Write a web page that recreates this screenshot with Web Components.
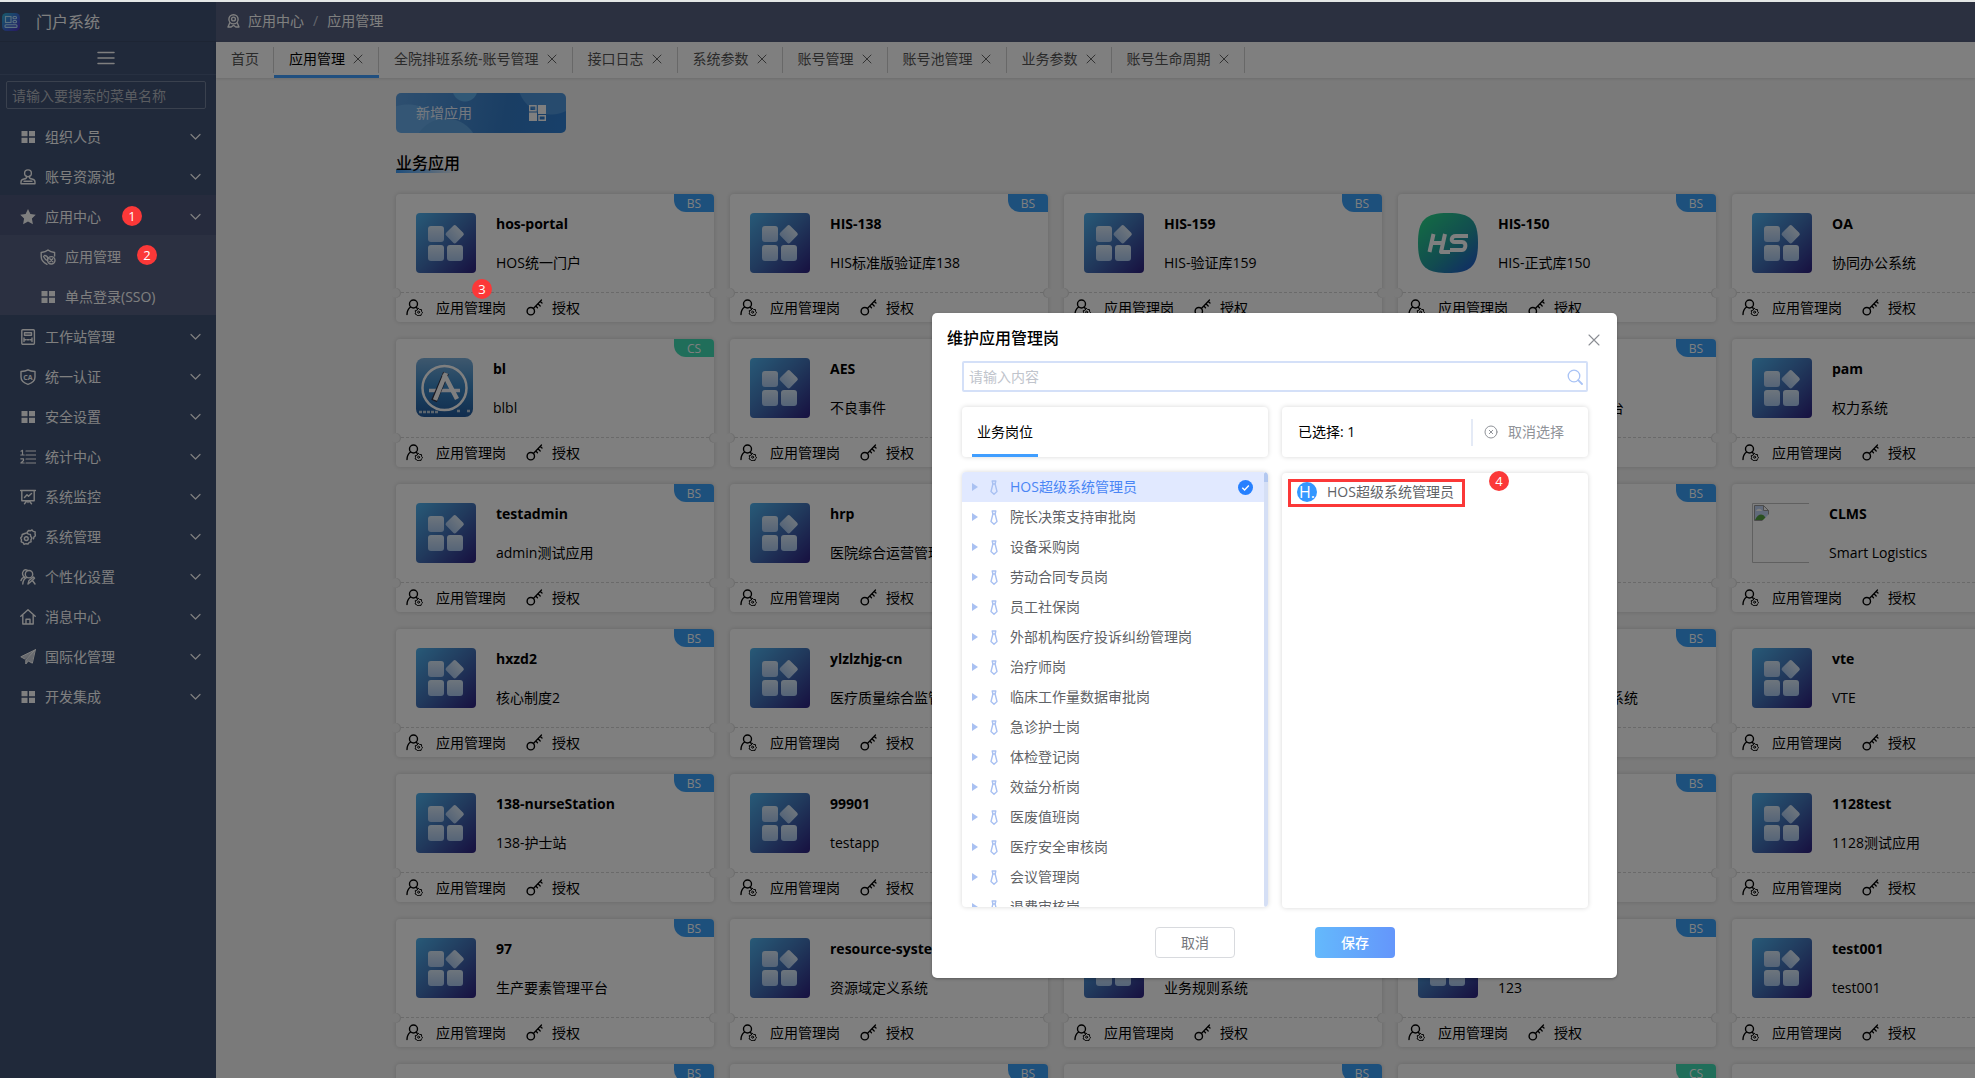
<!DOCTYPE html>
<html lang="zh-CN">
<head>
<meta charset="utf-8">
<title>门户系统</title>
<style>
html, body { margin: 0; height: 100%; overflow: hidden; }
body { font: 14px/20px "Open Sans", "Noto Sans CJK SC", sans-serif; color: #000; background: #f5f5f5; }
</style>
</head>
<body>
<portal-app></portal-app>
<script>
const svg = (w, h, body, box) => `<svg aria-hidden="true" width="${w}" height="${h}" viewBox="${box || `0 0 ${w} ${h}`}" fill="none" stroke="currentColor" stroke-width="1.4" stroke-linejoin="round" stroke-linecap="round">${body}</svg>`;
const ICONS = {
  grid: svg(16, 16, '<path d="M1.500 2h6v5.300h-6zM9 2h6v5.300H9zM1.500 8.800h6v5.200h-6zM9 8.800h6v5.200H9z" fill="currentColor" stroke="none"/>'),
  user: svg(16, 16, '<circle cx="8" cy="4.3" r="3.4"/><path d="M6.500 7.300C6.800 9 6 9.700 4 10c-2 .3-3 1.200-3 3v1.700h14V13c0-1.800-1-2.700-3-3-2-.3-2.800-1-2.500-2.700M4 12.300h8"/>'),
  star: svg(16, 16, '<path d="M8 0l2.400 5 5.400.8-3.900 3.800 1 5.600L8 12.500l-4.900 2.700 1-5.600L.2 5.800 5.600 5z" fill="currentColor" stroke="none"/>'),
  shieldUser: svg(16, 16, '<path d="M14.600 7V3.500C12 3.300 9.600 2.500 8 1 6.400 2.500 4 3.300 1.200 3.500v4c0 3.500 2 6 5.800 7.800"/><path d="M3.500 7.500c1 2 2.500 3.500 4 4M4.500 6.500c1.500 0 3 1 3.500 3"/><circle cx="11.300" cy="11.300" r="3.700"/><path d="M9.800 9.800l3 3m0-3l-3 3"/>'),
  station: svg(16, 16, '<rect x="1.800" y=".8" width="12.600" height="14.400" rx="1"/><path d="M4.500 3.800h7v2.400h-7zM4 9v3.500M12 9v3.500M4 10.800h2M10 10.800h2M7.300 10.800h1.400"/>'),
  ca: svg(16, 16, '<path d="M8 .8C6 2 3.500 2.400 1 2.500V8c0 3.500 3 6 7 7.300 4-1.300 7-3.800 7-7.300V2.500C12.500 2.400 10 2 8 .8z"/><text x="8" y="10.500" text-anchor="middle" font-size="7" font-weight="700" fill="currentColor" stroke="none" font-family="Open Sans">CA</text>'),
  ordered: svg(16, 16, '<path d="M6 2h10M6 6h10M6 10h10M6 14h10" stroke-width="1.200"/><path d="M1 2.200L2.500 1.400V6M.8 6h3.400M.8 9.800h2.700v1.700L.9 14h3.300" stroke-width="1.200"/>'),
  board: svg(16, 16, '<path d="M.5 1.500h15M1.800 1.500v10.300h12.400V1.500M4.500 8.500L7 5.800l1.500 1.400L11.500 4.500M6.800 12L4.500 14.800M9.200 12l2.300 2.800M8 12v1.500"/>'),
  gears: svg(16, 16, '<path d="M4.800 4.500l2-.6 1.600 1.200 2 .3.300 2 1.200 1.600-1 1.800.2 2-1.900.6-1.200 1.600-2-.3-1.900.6-1-1.700-1.900-.8.300-2L.6 9l1.300-1.500L2.200 5.500z"/><circle cx="6.300" cy="9.600" r="1.900"/><path d="M7.200 3.200L8.500 1.500l2 .3L12 .8l1.200 1.600 2 .5-.2 2 .6 1.700-1.500 1.200-.6 2"/>'),
  persona: svg(16, 16, '<circle cx="9" cy="5.200" r="3.700"/><path d="M6.800 8.300C4 9.500 3 11.500 2.800 15M4.500 8.200C2.500 7 2 4 3.200 2.300 4 1 5.800.6 7.200 1.200M1 11.500c.4-1.600 1.500-2.700 3-3.400M8 15l1-3.500 4.500-3.500 1 1.200-4.300 4L8 15zM12.500 11.500L15 15"/>'),
  home: svg(16, 16, '<path d="M.8 7.300L8 .8l7.200 6.500M2.800 6v9h10.400V6M6 15v-4.800h4V15"/>'),
  plane: svg(16, 16, '<path d="M15.200.8L.8 7.800l4 2.200zM15.200.8L5.800 11v4l2.500-3L12 14z" fill="currentColor" fill-opacity=".75" stroke-width="1"/>'),
  chevron: svg(11, 8, '<path d="M1 1.500l4.500 4.500L10 1.500" stroke-width="1.200"/>'),
  menu: svg(18, 14, '<path d="M1 1.500h16M1 7h16M1 12.500h16" stroke-width="1.500"/>'),
  cross: svg(10, 10, '<path d="M1 1l8 8M9 1L1 9" stroke-width="1"/>'),
  crossBig: svg(12, 12, '<path d="M1 1l10 10M11 1L1 11" stroke-width="1.100"/>'),
  medal: svg(13, 14, '<circle cx="6.500" cy="5.300" r="4.600"/><circle cx="6.500" cy="5" r="1.900"/><path d="M2.800 8.800L1 13h3.200l2.300-1.700L8.800 13H12l-1.800-4.200"/>'),
  postUser: svg(17, 17, '<circle cx="7.500" cy="5" r="4"/><path d="M4.600 8C2.500 9.500 1 12 1 15.500M10 8.300l1 .8"/><path d="M12.300 9.200l1.300 1.300 1.900.1.100 1.800 1 1.400-1.300 1.200-.4 1.600-1.700-.2-1.500.6-1.100-1.400-1.500-.6.500-1.600-.4-1.700 1.700-.5z" stroke-width="1"/><circle cx="12.600" cy="13.200" r="1" stroke-width="1"/>'),
  key: svg(17, 17, '<circle cx="4.800" cy="12.200" r="3.700"/><path d="M7.400 9.500L15.500 1M12 4.800l2.200 2.200M9.800 7l1.700 1.700M14.200 2.500l1.800 1.600" stroke-width="1.300"/>'),
  tile: '<svg aria-hidden="true" width="60" height="60" viewBox="0 0 60 60"><defs><linearGradient id="b" x1="0" y1="0" x2="1" y2="1"><stop offset="0" stop-color="#50b4f0"/><stop offset=".5" stop-color="#4272b8"/><stop offset="1" stop-color="#2e2080"/></linearGradient><linearGradient id="w" x1="0" y1="0" x2="0" y2="1"><stop offset="0" stop-color="#dcebfa"/><stop offset="1" stop-color="#abc9ef"/></linearGradient></defs><rect width="60" height="60" rx="4" fill="url(#b)"/><g fill="url(#w)"><rect x="12" y="13" width="16" height="16" rx="3"/><rect x="12" y="32" width="16" height="16" rx="3"/><rect x="31" y="32" width="16" height="16" rx="3"/><rect x="31.700" y="14.200" width="14" height="14" rx="2" transform="rotate(45 38.700 21.200)"/></g></svg>',
  hs: '<svg aria-hidden="true" width="60" height="60" viewBox="0 0 60 60"><defs><linearGradient id="g" x1="0.100" y1="0" x2="1" y2="1"><stop offset="0" stop-color="#28d888"/><stop offset=".55" stop-color="#2498a0"/><stop offset="1" stop-color="#2050d0"/></linearGradient></defs><path d="M30 0C53 0 60 7 60 30S53 60 30 60 0 53 0 30 7 0 30 0z" fill="url(#g)"/><g fill="none" stroke="#fff" stroke-width="4" stroke-linejoin="round"><path d="M15.500 21l-4 18M14 30h10M27 21l-4 18h9M50 23H38c-5 0-6 6-1 6h7c5 0 4 8 0 8H32"/></g></svg>',
  store: '<svg aria-hidden="true" width="57" height="60" viewBox="0 0 57 60"><defs><linearGradient id="a" x1="0" y1="0" x2="0" y2="1"><stop offset="0" stop-color="#7cb0dc"/><stop offset=".5" stop-color="#3a86c4"/><stop offset="1" stop-color="#225a9c"/></linearGradient></defs><rect width="57" height="59" rx="8" fill="url(#a)"/><circle cx="28.500" cy="30" r="22" fill="none" stroke="#fff" stroke-width="2.500"/><path d="M13 32.500h31" stroke="#f4f4fa" stroke-width="3.500"/><path d="M30 15L18 43" stroke="#334" stroke-width="6"/><path d="M30 15L19 42M28 16l13 25" stroke="#fff" stroke-width="4.500"/><path d="M3 54h20M41 53h4M51 53h3" stroke="#bcd" stroke-width="2.500" stroke-dasharray="3 1"/></svg>',
  broken: '<svg aria-hidden="true" width="57" height="60" viewBox="0 0 57 60"><path d="M57 .5H.5v59H57" fill="none" stroke="#c0c0c0"/><path d="M2.500 2.500h9l5 5v10h-14z" fill="#c2d4f4" stroke="#999"/><path d="M11.500 2.500v5h5z" fill="#fff" stroke="#999"/><path d="M3 17c3-6 7-7 10-3l3 3z" fill="#54a040"/><path d="M10 18l8-8v8z" fill="#fff"/><path d="M4 8c1-3 5-3 6 0z" fill="#fff"/></svg>',
  blocks: '<svg aria-hidden="true" width="17" height="16" viewBox="0 0 17 16" fill="#fff"><path d="M9 0h8v9H9zM0 7.500h8V16H0z"/><path d="M.7.700h6.300v5H.7zM10 10.700h6.300v4.600H10z" fill="none" stroke="#fff" stroke-width="1.400"/></svg>',
  logo: '<svg aria-hidden="true" width="18" height="18" viewBox="0 0 18 18"><defs><linearGradient id="l" x1="0" y1="0" x2="1" y2="1"><stop offset="0" stop-color="#30b8d8"/><stop offset=".5" stop-color="#3a70d8"/><stop offset="1" stop-color="#5030c0"/></linearGradient></defs><rect width="18" height="18" rx="4.500" fill="url(#l)"/><g fill="none" stroke="#b8e4ff" stroke-width="1.100"><rect x="3.500" y="3.500" width="5.500" height="6"/><rect x="11" y="3.500" width="3.500" height="2.200" rx="1"/><rect x="11" y="7.500" width="3.500" height="2.200" rx="1"/><rect x="3" y="11.800" width="12" height="2.600" rx="1"/></g></svg>',
  search: svg(16, 16, '<circle cx="7" cy="7" r="5.800" stroke-width="1.300"/><path d="M11.200 11.200L15 15" stroke-width="1.800"/>'),
  clear: svg(14, 14, '<circle cx="7" cy="7" r="6" stroke-width="1"/><path d="M5.300 5.300l3.400 3.400M8.700 5.300L5.300 8.700" stroke-width="1"/>'),
  caret: svg(6, 8, '<path d="M0 0l6 4-6 4z" fill="currentColor" stroke="none"/>'),
  tie: svg(8, 15, '<path d="M2.200 1h3.600l-.7 3 1.900 7.500L4 14.200 1 11.500 2.900 4zM2.700 4h2.600" stroke-width="1.400"/>'),
  check: '<svg aria-hidden="true" width="15" height="15" viewBox="0 0 15 15"><circle cx="7.500" cy="7.500" r="7.500" fill="#2680ff"/><path d="M4.300 7.700l2.300 2.300 4.200-4.500" fill="none" stroke="#fff" stroke-width="1.400"/></svg>'
};
const RESET = `*{box-sizing:border-box}svg{display:block;flex:none}
button,input{font:inherit;color:inherit;background:none;border:0;padding:0;margin:0;text-align:left;white-space:nowrap}
a{color:inherit;text-decoration:none}ul{list-style:none;margin:0;padding:0}
h1,h2,h3,p{margin:0;font:inherit}`;

function define(name, css, render) {
  customElements.define(name, class extends HTMLElement {
    connectedCallback() {
      if (this.shadowRoot) return;
      this.attachShadow({ mode: 'open' }).innerHTML = `<style>${RESET}${css}</style>${render(this)}`;
    }
  });
}
const attr = (el, n) => el.getAttribute(n) || '';

define('menu-entry', `
:host{display:block}
a{display:flex;align-items:center;height:40px;padding:3px 15px 0 20px;gap:9px;color:#fff}
.label{flex:1}
:host([active]) a{background:#4c567a}
:host([sub]) a{padding-left:40px;background:#566082}
`, el => `<a href="#">${ICONS[attr(el, 'icon')]}<span class="label"><slot></slot></span>${el.hasAttribute('sub') ? '' : ICONS.chevron}</a>`);

define('side-menu', `
:host{display:block;width:216px;flex:none;background:#405274;color:#fff}
header{display:flex;align-items:center;height:40px;padding:0 2px;gap:16px;font-size:16px;border-bottom:1px solid #3a4a68}
.fold{display:flex;justify-content:center;height:33px;padding-right:4px;border-bottom:1px solid #4e6082}
.find{padding:6px 10px 6px 6px}
input{display:block;width:100%;height:28px;border:1px solid #74829c;border-radius:2px;padding:0 5px}
input::placeholder{color:#b4b8c0;opacity:1}
`, () => `
<header>${ICONS.logo}<h1>门户系统</h1></header>
<div class="fold"><button aria-label="收起菜单">${ICONS.menu}</button></div>
<div class="find"><input aria-label="搜索菜单" placeholder="请输入要搜索的菜单名称"></div>
<nav>
<menu-entry icon="grid">组织人员</menu-entry>
<menu-entry icon="user">账号资源池</menu-entry>
<menu-entry icon="star" active>应用中心</menu-entry>
<menu-entry icon="shieldUser" sub>应用管理</menu-entry>
<menu-entry icon="grid" sub>单点登录(SSO)</menu-entry>
<menu-entry icon="station">工作站管理</menu-entry>
<menu-entry icon="ca">统一认证</menu-entry>
<menu-entry icon="grid">安全设置</menu-entry>
<menu-entry icon="ordered">统计中心</menu-entry>
<menu-entry icon="board">系统监控</menu-entry>
<menu-entry icon="gears">系统管理</menu-entry>
<menu-entry icon="persona">个性化设置</menu-entry>
<menu-entry icon="home">消息中心</menu-entry>
<menu-entry icon="plane">国际化管理</menu-entry>
<menu-entry icon="grid">开发集成</menu-entry>
</nav>`);

define('page-tab', `
:host{display:flex;align-items:center;gap:8px;height:36px;padding:0 15px 2px;color:#555;position:relative;white-space:nowrap}
:host::after{content:"";position:absolute;right:0;top:5px;height:26px;width:1px;background:#d0d0d0}
:host([active]){color:#000;box-shadow:inset 0 -3px #409eff}
:host([closable]){padding-right:16px}
button{color:#666}
`, el => `<a href="#"><slot></slot></a>${el.hasAttribute('closable') ? `<button aria-label="关闭">${ICONS.cross}</button>` : ''}`);

define('top-bar', `
:host{display:block}
.crumbs{display:flex;align-items:center;gap:8px;height:40px;padding:0 0 2px 11px;background:#566080;color:#fff}
.sep{padding:0 1px;color:#c8ccd8}
.tabs{display:flex;height:36px;background:#fff;box-shadow:0 1px 3px rgba(0,0,0,.12)}
`, () => `
<nav class="crumbs">${ICONS.medal}<a href="#">应用中心</a><span class="sep">/</span><a href="#">应用管理</a></nav>
<div class="tabs"><page-tab>首页</page-tab><page-tab closable active>应用管理</page-tab>
${['全院排班系统-账号管理', '接口日志', '系统参数', '账号管理', '账号池管理', '业务参数', '账号生命周期'].map(t => `<page-tab closable>${t}</page-tab>`).join('')}</div>`);

define('app-card', `
:host{display:block;position:relative;height:128px;background:#fff;border-radius:4px;box-shadow:0 0 5px rgba(0,0,0,.16)}
.body{display:flex;gap:20px;height:99px;padding:19px 20px 0;border-bottom:1px dashed #d4d4d4}
.text{padding-top:1px;white-space:nowrap}
h3{font-weight:700;line-height:20px;margin-bottom:19px}
p{line-height:20px}
.actions{display:flex;height:29px;padding:0 10px}
button{display:flex;align-items:center;gap:13px;margin-right:20px}
button+button{gap:9px}
.tag{position:absolute;top:0;right:0;width:40px;height:18px;border-radius:0 4px 0 12px;background:#3aa0f8;color:#fff;font-size:12px;line-height:19px;text-align:center}
.cs{background:#40dcb4}
.notch{position:absolute;top:94px;left:-5px;width:10px;height:10px;border-radius:5px;background:#f5f5f5;box-shadow:inset -1px 0 1px rgba(0,0,0,.12)}
.right{left:auto;right:-5px;box-shadow:inset 1px 0 1px rgba(0,0,0,.12)}
`, el => `
<div class="body">${ICONS[attr(el, 'icon') || 'tile']}<div class="text"><h3><slot name="title"></slot></h3><p><slot></slot></p></div></div>
<div class="actions"><button>${ICONS.postUser}应用管理岗</button><button>${ICONS.key}授权</button></div>
<span class="tag ${attr(el, 'kind') === 'CS' ? 'cs' : ''}">${attr(el, 'kind') || 'BS'}</span>
<i class="notch"></i><i class="notch right"></i>`);

const APPS = [
  ['hos-portal', 'HOS统一门户'], ['HIS-138', 'HIS标准版验证库138'], ['HIS-159', 'HIS-验证库159'], ['HIS-150', 'HIS-正式库150', '', 'hs'], ['OA', '协同办公系统'],
  ['bl', 'blbl', 'CS', 'store'], ['AES', '不良事件'], ['', ''], ['', '一体化运营管理平台'], ['pam', '权力系统'],
  ['testadmin', 'admin测试应用'], ['hrp', '医院综合运营管理'], ['', ''], ['', ''], ['CLMS', 'Smart Logistics', '', 'broken'],
  ['hxzd2', '核心制度2'], ['ylzlzhjg-cn', '医疗质量综合监管'], ['', ''], ['', '医疗质量安全管理系统'], ['vte', 'VTE'],
  ['138-nurseStation', '138-护士站'], ['99901', 'testapp'], ['', ''], ['', ''], ['1128test', '1128测试应用'],
  ['97', '生产要素管理平台'], ['resource-system', '资源域定义系统'], ['', '业务规则系统'], ['', '123'], ['test001', 'test001'],
  ['', ''], ['', ''], ['', ''], ['', '', 'CS'], ['', '']
];

define('app-board', `
:host{display:block;flex:1;min-height:0;overflow:hidden;padding:15px 0 0 180px}
.add{position:relative;display:flex;justify-content:space-between;align-items:center;width:170px;height:40px;padding:0 20px;border-radius:5px;overflow:hidden;color:#e8f2ff;
background:radial-gradient(circle at 69px -4px,#60b0ec 0 12px,transparent 13px),radial-gradient(circle at 155px -12px,#4e96dc 0 33px,transparent 34px),radial-gradient(circle at 50px 58px,#5ea4e2 0 32px,transparent 33px),radial-gradient(circle at 12px 52px,#68acea 0 40px,transparent 41px),linear-gradient(100deg,#5c9fe0,#347cc8 65%,#3080d4)}
h2{display:inline-block;margin-top:20px;font-size:16px;font-weight:500;line-height:20px;background:linear-gradient(90deg,#3c9cf8,#409eff00) 0 16px/64px 4px no-repeat}
.cards{display:grid;grid-template-columns:repeat(5,318px);gap:17px 16px;margin-top:20px}
`, () => `
<button class="add">新增应用${ICONS.blocks}</button>
<h2>业务应用</h2>
<div class="cards">${APPS.map(([t, d, k, i]) => `<app-card kind="${k || 'BS'}" icon="${i || 'tile'}"><span slot="title">${t || '&nbsp;'}</span>${d}</app-card>`).join('')}</div>`);

define('post-node', `
:host{display:block}
button{display:flex;align-items:center;width:100%;height:30px;padding:0 11px 0 10px;color:#606266}
.caret,.tie{color:#a9c1f2}
.caret{margin-right:12px}.tie{margin-right:12px}
.label{flex:1}
:host([selected]) button{background:#e1e9ff;color:#4a86f5}
`, el => `<button><span class="caret">${ICONS.caret}</span><span class="tie">${ICONS.tie}</span><span class="label"><slot></slot></span>${el.hasAttribute('selected') ? ICONS.check : ''}</button>`);

const POSTS = ['院长决策支持审批岗', '设备采购岗', '劳动合同专员岗', '员工社保岗', '外部机构医疗投诉纠纷管理岗', '治疗师岗', '临床工作量数据审批岗', '急诊护士岗', '体检登记岗', '效益分析岗', '医废值班岗', '医疗安全审核岗', '会议管理岗', '退费审核岗'];

define('post-dialog', `
:host{display:flex;flex-direction:column;width:685px;background:#fff;border-radius:5px;box-shadow:0 1px 3px rgba(0,0,0,.3);padding:15px 29px 20px 30px}
header{display:flex;justify-content:space-between;align-items:center;height:20px;margin:0 -12px 0 -15px}
header h2{font-size:16px;font-weight:500}
header button{color:#8a8d93;padding:4px 0 0}
.find{display:flex;align-items:center;height:31px;margin-top:13px;padding:0 3px 0 5px;border:2px solid #d4e0f8;border-radius:2px;color:#a9c3f5}
.find input{flex:1;outline:0;color:#333}
.find input::placeholder{color:#c0c4cc;opacity:1}
.pair{display:grid;grid-template-columns:1fr 1fr;gap:14px;margin-top:15px}
.box{border-radius:4px;box-shadow:0 0 5px rgba(0,0,0,.16);background:#fff}
.head{display:flex;height:50px}
.tab{margin-left:10px;padding:3px 5px 0;border-bottom:3px solid #409eff}
.head.count{align-items:center;justify-content:space-between;padding:0 24px 0 16px}
.clear{display:flex;align-items:center;gap:10px;height:27px;padding-left:11px;border-left:2px solid #e4eaf6;color:#909399}
.tree{height:435px;overflow:hidden;display:flex}
.tree ul{flex:1}
.bar{width:4px;background:linear-gradient(#b3c8f0 10px,#d5dff5 10px);border-radius:2px}
.lists{margin-top:15px}
.picked{height:435px;margin-top:1px;padding:6px}
.pick{display:flex;align-items:center;gap:10px;width:177px;height:28px;padding:0 6px 3px;border:3px solid #fb3838;color:#606266;white-space:nowrap}
.face{width:20px;height:20px;border-radius:10px;background:#3397ff;color:#fff;text-align:center;font-size:16px}
footer{display:flex;justify-content:center;gap:80px;margin-top:19px}
footer button{width:80px;height:31px;border-radius:4px;text-align:center;border:1px solid #d8dade;color:#75777c}
footer .save{border:0;color:#fff;background:linear-gradient(90deg,#64b9fc,#6496fb);font-weight:500}
`, () => `
<header><h2>维护应用管理岗</h2><button aria-label="关闭">${ICONS.crossBig}</button></header>
<div class="find"><input aria-label="搜索岗位" placeholder="请输入内容">${ICONS.search}</div>
<div class="pair">
<div class="box head"><button class="tab">业务岗位</button></div>
<div class="box head count"><span>已选择: 1</span><button class="clear">${ICONS.clear}取消选择</button></div>
</div>
<div class="pair lists">
<div class="box tree"><ul><li><post-node selected>HOS超级系统管理员</post-node></li>${POSTS.map(p => `<li><post-node>${p}</post-node></li>`).join('')}</ul><div class="bar"></div></div>
<div class="box picked"><div class="pick"><span class="face">H.</span>HOS超级系统管理员</div></div>
</div>
<footer><button>取消</button><button class="save">保存</button></footer>`);

define('step-badge', `
:host{position:absolute;width:20px;height:20px;border-radius:10px;background:#fb3838;color:#fff;font-size:13px;line-height:20px;text-align:center}
`, () => `<slot></slot>`);

define('portal-app', `
:host{display:flex;height:100vh;box-sizing:border-box;border-top:2px solid #e4e7e6;position:relative;overflow:hidden}
side-menu{min-height:100%}
main{flex:1;min-width:0;display:flex;flex-direction:column}
.mask{position:absolute;inset:0;background:rgba(0,0,0,.5)}
post-dialog{position:absolute;left:932px;top:311px}
`, () => `
<side-menu></side-menu>
<main><top-bar></top-bar><app-board></app-board></main>
<div class="mask"></div>
<post-dialog role="dialog" aria-label="维护应用管理岗"></post-dialog>
<step-badge style="left:122px;top:204px">1</step-badge>
<step-badge style="left:137px;top:243px">2</step-badge>
<step-badge style="left:472px;top:277px">3</step-badge>
<step-badge style="left:1489px;top:469px">4</step-badge>`);
</script>
</body>
</html>
